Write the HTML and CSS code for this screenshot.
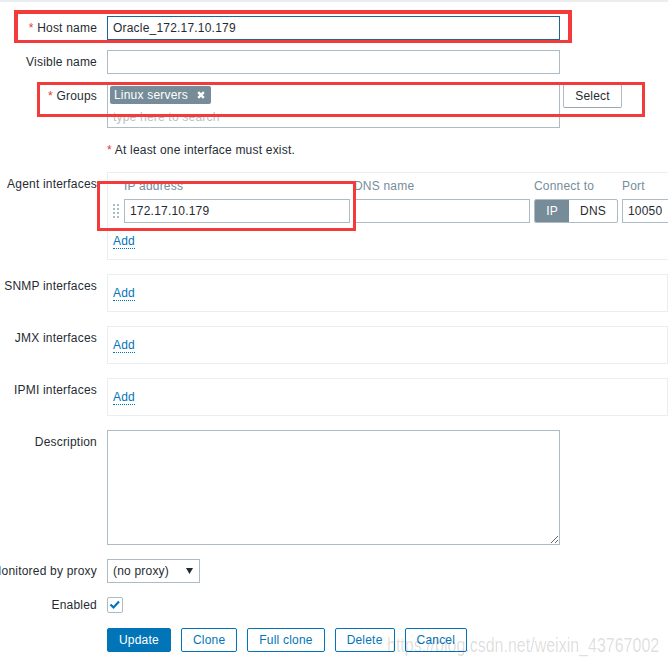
FILE: index.html
```html
<!DOCTYPE html>
<html lang="en">
<head>
    <meta charset="UTF-8">
    <title>Host</title>
    <link rel="stylesheet" href="styles.css">
</head>
<body>
    <div class="topline"></div>
    <div class="form">
        <div class="row">
            <div class="label"><span><b class="req">*</b> Host name</span></div>
            <input class="text focus" type="text" value="Oracle_172.17.10.179">
        </div>
        <div class="row">
            <div class="label"><span>Visible name</span></div>
            <input class="text" type="text" value="">
        </div>
        <div class="row">
            <div class="label"><span><b class="req">*</b> Groups</span></div>
            <div class="multi">
                <div class="tags">
                    <span class="tag">Linux servers
                        <svg class="tag-x" width="8" height="8" viewBox="0 0 8 8"><path d="M1.2 1.2L6.8 6.8M6.8 1.2L1.2 6.8" stroke="#fff" stroke-width="2.4"/></svg>
                    </span>
                </div>
                <div class="search">type here to search</div>
            </div>
            <button class="btn-select">Select</button>
        </div>
        <div class="row">
            <div class="label"></div>
            <div class="msg"><b class="req">*</b> At least one interface must exist.</div>
        </div>
        <div class="row sp">
            <div class="label"><span>Agent interfaces</span></div>
            <div class="iface agent">
                <div class="iface-grid">
                    <div></div>
                    <div class="head">IP address</div>
                    <div class="head">DNS name</div>
                    <div class="head">Connect to</div>
                    <div class="head">Port</div>
                </div>
                <div class="iface-grid inputs">
                    <div class="handle">
                        <svg width="6" height="16" viewBox="0 0 6 16">
                            <rect x="0" y="1" width="2" height="2" fill="#acbbc4"/><rect x="4" y="1" width="2" height="2" fill="#acbbc4"/>
                            <rect x="0" y="5" width="2" height="2" fill="#acbbc4"/><rect x="4" y="5" width="2" height="2" fill="#acbbc4"/>
                            <rect x="0" y="9" width="2" height="2" fill="#acbbc4"/><rect x="4" y="9" width="2" height="2" fill="#acbbc4"/>
                            <rect x="0" y="13" width="2" height="2" fill="#acbbc4"/><rect x="4" y="13" width="2" height="2" fill="#acbbc4"/>
                        </svg>
                    </div>
                    <input class="text" type="text" value="172.17.10.179">
                    <input class="text" type="text" value="">
                    <div class="toggle"><span class="on">IP</span><span>DNS</span></div>
                    <input class="text" type="text" value="10050">
                </div>
                <div class="add-line"><a class="add">Add</a></div>
            </div>
        </div>
        <div class="row sp">
            <div class="label"><span>SNMP interfaces</span></div>
            <div class="iface"><div class="add-line"><a class="add">Add</a></div></div>
        </div>
        <div class="row sp">
            <div class="label"><span>JMX interfaces</span></div>
            <div class="iface"><div class="add-line"><a class="add">Add</a></div></div>
        </div>
        <div class="row sp">
            <div class="label"><span>IPMI interfaces</span></div>
            <div class="iface"><div class="add-line"><a class="add">Add</a></div></div>
        </div>
        <div class="row sp">
            <div class="label"><span>Description</span></div>
            <textarea class="desc"></textarea>
        </div>
        <div class="row sp">
            <div class="label"><span>Monitored by proxy</span></div>
            <div class="select"><span>(no proxy)</span>
                <svg width="7" height="6" viewBox="0 0 7 6"><path d="M0 0H7L3.5 6Z" fill="#1f2c33"/></svg>
            </div>
        </div>
        <div class="row sp">
            <div class="label short"><span>Enabled</span></div>
            <div class="check">
                <svg width="14" height="14" viewBox="0 0 14 14"><path d="M2.5 6.5L5.5 9.5L11 3.5" fill="none" stroke="#0275b8" stroke-width="2.2"/></svg>
            </div>
        </div>
        <div class="row">
            <div class="label"></div>
            <div class="buttons">
                <button class="btn main">Update</button>
                <button class="btn">Clone</button>
                <button class="btn">Full clone</button>
                <button class="btn">Delete</button>
                <button class="btn">Cancel</button>
            </div>
        </div>
    </div>

    <div class="mark mark-host"></div>
    <div class="mark mark-groups"></div>
    <div class="mark mark-agent"></div>
    <div class="watermark">https://blog.csdn.net/weixin_43767002</div>
</body>
</html>
```
FILE: styles.css
```css
body { margin: 0; font-family: "Liberation Sans", Arial, sans-serif; font-size: 12px; letter-spacing: 0.2px; color: #1f2c33; background: #fff; overflow: hidden; }
.topline { height: 2px; background: #ebeef0; }
.form { padding-top: 14px; }
.row { display: flex; align-items: flex-start; margin-bottom: 10px; }
.row.sp { margin-bottom: 14px; }
.label { flex: 0 0 97px; min-width: 0; margin-right: 10px; display: flex; justify-content: flex-end; white-space: nowrap; padding-top: 3px; line-height: 18px; }
.label span { flex-shrink: 0; }
.label.short { padding-top: 0; line-height: 17px; }
.req { color: #e33734; font-weight: normal; }

.text { box-sizing: border-box; height: 24px; width: 453px; margin: 0; border: 1px solid #acbbc4; padding: 0 5px; font: inherit; letter-spacing: inherit; color: #1f2c33; background: #fff; outline: none; }
.text.focus { border-color: #1d6499; }

.multi { box-sizing: border-box; width: 453px; height: 44px; border: 1px solid #acbbc4; padding: 1px 2px; }
.tags { display: flex; height: 18px; }
.tag { display: inline-flex; align-items: center; height: 18px; background: #768d99; color: #fff; padding: 0 6px 0 4px; border-radius: 2px; }
.tag-x { margin-left: 9px; }
.search { margin-top: 3px; height: 20px; line-height: 20px; padding-left: 3px; color: #b5c0c6; }
.btn-select { margin-left: 3px; box-sizing: border-box; height: 24px; width: 59px; border: 1px solid #acbbc4; border-bottom-color: #98a8b1; background: #fff; border-radius: 2px; font: inherit; letter-spacing: inherit; color: #1f2c33; padding: 0; }

.msg { padding-top: 3px; line-height: 18px; height: 21px; }

.iface { box-sizing: border-box; width: 620px; border: 1px solid #ebeef0; padding: 9px 5px; }
.iface.agent { padding-top: 4px; }
.iface-grid { display: grid; grid-template-columns: 7px 226px 176px 84px 60px; column-gap: 4px; }
.iface-grid .head { line-height: 18px; color: #768d99; white-space: nowrap; }
.iface-grid.inputs { margin-top: 4px; margin-bottom: 9px; }
.iface-grid .text { width: 100%; }
.handle { display: flex; align-items: center; height: 24px; }
.toggle { box-sizing: border-box; display: flex; height: 24px; border: 1px solid #acbbc4; border-radius: 2px; overflow: hidden; }
.toggle span { flex: 1; display: flex; align-items: center; justify-content: center; }
.toggle span.on { flex: 0 0 34px; background: #768d99; color: #fff; }
.add-line { height: 18px; padding-top: 2px; box-sizing: border-box; }
.add { display: inline-block; line-height: 13px; color: #0275b8; border-bottom: 1px dotted #0275b8; cursor: pointer; }

.desc { box-sizing: border-box; display: block; width: 453px; height: 115px; margin: 0; border: 1px solid #acbbc4; padding: 3px 5px; font: inherit; outline: none; }

.select { box-sizing: border-box; display: flex; align-items: center; justify-content: space-between; width: 93px; height: 24px; border: 1px solid #acbbc4; padding: 0 6px 0 5px; }
.check { box-sizing: border-box; display: flex; align-items: center; justify-content: center; width: 16px; height: 16px; border: 1px solid #acbbc4; border-radius: 2px; }

.buttons { display: flex; gap: 10px; }
.btn { box-sizing: border-box; height: 24px; padding: 0 11px; border: 1px solid #0275b8; border-radius: 2px; background: #fff; color: #0275b8; font: inherit; letter-spacing: inherit; }
.btn.main { background: #0275b8; color: #fff; padding: 0 11px; }

.mark { position: absolute; box-sizing: border-box; border: 3px solid #f43b3b; }
.mark-host { left: 14px; top: 10px; width: 558px; height: 33px; border-width: 4px 4px 3px 4px; }
.mark-groups { left: 37px; top: 82px; width: 608px; height: 35px; }
.mark-agent { left: 97px; top: 181px; width: 259px; height: 50px; }
.watermark { position: absolute; left: 387px; top: 635px; font-size: 20px; line-height: 20px; letter-spacing: 0; color: rgba(0, 0, 0, 0.14); white-space: nowrap; transform: scaleX(0.8); transform-origin: left top; }
```
